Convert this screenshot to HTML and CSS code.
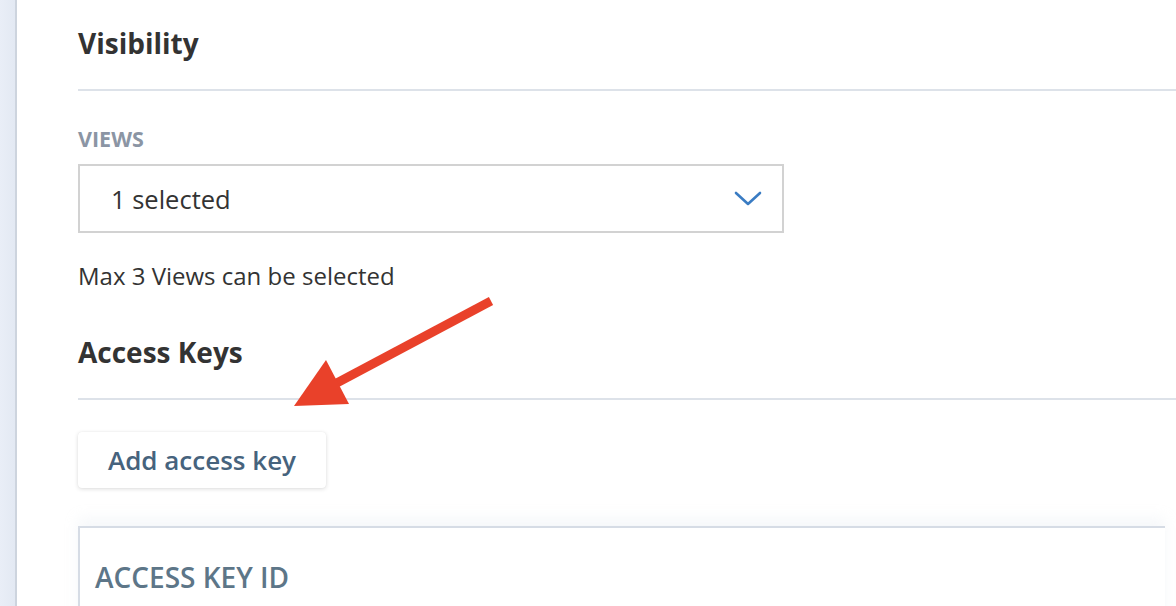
FILE: index.html
```html
<!DOCTYPE html>
<html>
<head>
<meta charset="utf-8">
<link rel="stylesheet" href="styles.css">
</head>
<body>
<div class="app">
  <aside class="rail"></aside>
  <main class="content">
    <section class="section">
      <h2 class="section-title">Visibility</h2>
      <div class="divider"></div>
      <div class="field">
        <div class="field-label">VIEWS</div>
        <div class="select">
          <span class="select-value">1 selected</span>
          <svg class="chevron" width="28" height="16" viewBox="0 0 28 16"><path d="M2 2 L14 13 L26 2" fill="none" stroke="#3a7cc3" stroke-width="2.6" stroke-linecap="round" stroke-linejoin="round"/></svg>
        </div>
        <div class="help">Max 3 Views can be selected</div>
      </div>
    </section>
    <section class="section keys">
      <h2 class="section-title">Access Keys</h2>
      <div class="divider"></div>
      <button class="btn">Add access key</button>
      <div class="table">
        <div class="th">ACCESS KEY ID</div>
      </div>
    </section>
    <svg class="annot" width="1176" height="606" viewBox="0 0 1176 606">
      <line x1="491" y1="301" x2="333" y2="385" stroke="#e9412a" stroke-width="9"/>
      <polygon points="294,406 326,360 349,404" fill="#e9412a"/>
    </svg>
  </main>
</div>
</body>
</html>
```
FILE: styles.css
```css
* { box-sizing: border-box; }
html, body { margin: 0; padding: 0; background: #fff; }
body { font-family: "Open Sans", "Noto Sans", sans-serif; color: #333; }
.app { display: flex; overflow: hidden; height: 606px; }
.rail {
  width: 17px; flex: none;
  background: linear-gradient(90deg, #e9eef7, #e3e9f3);
  border-right: 2px solid #cdd4de;
}
.content { flex: 1; padding-left: 61px; position: relative; }
.section-title {
  margin: 0; font-size: 28px; font-weight: 700; line-height: 38px; color: #333;
}
.section:first-child .section-title { padding-top: 24px; }
.divider { height: 2px; background: #dde2e9; margin-top: 27px; }
.field { padding-top: 34px; }
.field-label { font-size: 21.5px; font-weight: 700; color: #8b95a4; line-height: 27px; }
.select {
  margin-top: 12px; width: 706px; height: 69px;
  border: 2px solid #d2d2d2; display: flex; align-items: center;
  justify-content: space-between; padding: 0 20px 0 31px;
}
.select-value { font-size: 25.5px; color: #333; }
.chevron { display: block; }
.help { font-size: 24px; color: #333; margin-top: 27px; line-height: 32px; }
.keys .section-title { margin-top: 41px; }
.btn {
  display: block; margin-top: 32px; width: 248px; height: 56px;
  border: none; border-radius: 4px; background: #fff;
  box-shadow: 0 1px 4px rgba(0,0,0,0.14), 0 0 1px rgba(0,0,0,0.08);
  font-family: inherit; font-size: 26px; font-weight: 600; color: #46637d;
  padding: 0;
}
.table {
  margin-top: 38px; width: 1087px; height: 120px;
  border-top: 2px solid #d6dce5; border-left: 2px solid #d6dce5;
  box-shadow: 0 -8px 12px rgba(220,226,234,0.25);
  padding: 30px 0 0 15px;
}
.th { font-size: 28px; font-weight: 600; color: #5d7688; line-height: 38px; }
.annot { position: absolute; left: -17px; top: 0; pointer-events: none; }
```
